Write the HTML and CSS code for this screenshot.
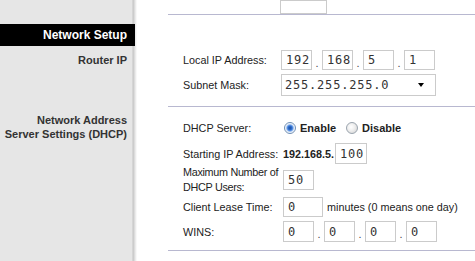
FILE: index.html
```html
<!DOCTYPE html>
<html lang="en">

<head>
    <meta charset="UTF-8">
    <meta name="viewport" content="width=device-width, initial-scale=1.0">
    <title>Network Setup</title>
    <link rel="stylesheet" href="styles.css">
</head>

<body>
    <div class="page">
        <!-- Left menu column -->
        <div class="sidebar">
            <div class="side-title">Network Setup</div>
            <div class="side-item router-head">Router IP</div>
            <div class="side-item dhcp-head">Network Address<br>Server Settings (DHCP)</div>
        </div>

        <!-- Settings -->
        <div class="main">
            <div class="stub-row"><input class="box stub" type="text" value=""></div>
            <hr class="rule">

            <div class="group lan">
                <div class="row h20">
                    <span class="label">Local IP Address:</span>
                    <div class="ip">
                        <input class="box w31" type="text" value="192">
                        <span class="dot">.</span>
                        <input class="box w31" type="text" value="168">
                        <span class="dot">.</span>
                        <input class="box w31" type="text" value="5">
                        <span class="dot">.</span>
                        <input class="box w31" type="text" value="1">
                    </div>
                </div>
                <div class="row h22 next-row">
                    <span class="label">Subnet Mask:</span>
                    <div class="box select">255.255.255.0<span class="caret"></span></div>
                </div>
            </div>
            <hr class="rule">

            <div class="group dhcp">
                <div class="row h18">
                    <span class="label">DHCP Server:</span>
                    <div class="field radios">
                        <label class="option"><span class="radio checked"></span>Enable</label>
                        <label class="option"><span class="radio"></span>Disable</label>
                    </div>
                </div>
                <div class="row h21 gap6">
                    <span class="label">Starting IP Address:</span>
                    <div class="field start-ip">
                        <b>192.168.5.</b>
                        <input class="box w32" type="text" value="100">
                    </div>
                </div>
                <div class="row h26 gap3">
                    <span class="label tight">Maximum Number of<br>DHCP Users:</span>
                    <div class="field"><input class="box w31" type="text" value="50"></div>
                </div>
                <div class="row h20 gap4">
                    <span class="label">Client Lease Time:</span>
                    <div class="field lease">
                        <input class="box w40" type="text" value="0">
                        <span>minutes (0 means one day)</span>
                    </div>
                </div>
                <div class="row h21 gap4">
                    <span class="label">WINS:</span>
                    <div class="field ip">
                        <input class="box w31" type="text" value="0">
                        <span class="dot">.</span>
                        <input class="box w31" type="text" value="0">
                        <span class="dot">.</span>
                        <input class="box w31" type="text" value="0">
                        <span class="dot">.</span>
                        <input class="box w31" type="text" value="0">
                    </div>
                </div>
            </div>
            <hr class="rule">
        </div>
    </div>
</body>

</html>
```

FILE: styles.css
```css
body {
    margin: 0;
    font-family: 'Liberation Sans', Arial, sans-serif;
    font-size: 10.8px;
    color: #222;
    background: #fff;
}

.page {
    display: flex;
    height: 261px;
    overflow: hidden;
}

.sidebar {
    width: 137px;
    flex: none;
    background: linear-gradient(to right, #e6e6e6 0, #e6e6e6 132px, #c4c4c4 133px, #e4e4e4 135px, #fff 137px);
}

.side-title {
    margin-top: 24px;
    width: 135px;
    height: 22px;
    line-height: 22px;
    padding-right: 8px;
    box-sizing: border-box;
    background: #000;
    color: #fff;
    font-size: 12px;
    font-weight: bold;
    text-align: right;
}

.side-item {
    padding-right: 10px;
    line-height: 14px;
    color: #333;
    font-size: 11px;
    font-weight: bold;
    text-align: right;
}

.router-head {
    margin-top: 7px;
}

.dhcp-head {
    margin-top: 46px;
}

.main {
    flex: 1;
    padding-left: 31px;
}

.rule {
    margin: 0;
    height: 0;
    border: 0;
    border-top: 1px solid #b8b8d0;
}

.stub-row {
    height: 14px;
    padding-left: 112px;
}

.stub {
    display: block;
    width: 47px;
    height: 21px;
    margin-top: -8px;
}

.group {
    padding-left: 15px;
}

.lan {
    padding-top: 35px;
    padding-bottom: 10px;
}

.dhcp {
    padding-top: 12px;
    padding-bottom: 8px;
}

.row {
    display: flex;
    align-items: center;
}

.h18 { height: 18px; }
.h20 { height: 20px; }
.h21 { height: 21px; }
.h22 { height: 22px; }
.h26 { height: 26px; }

.next-row { margin-top: 4px; }
.gap3 { margin-top: 3px; }
.gap4 { margin-top: 4px; }
.gap6 { margin-top: 6px; }

.label {
    width: 98px;
    flex: none;
    line-height: 14px;
    white-space: nowrap;
    color: #222;
}

.label.tight {
    line-height: 15px;
    letter-spacing: -0.3px;
}

.field {
    margin-left: 2px;
}

.box {
    box-sizing: border-box;
    height: 100%;
    margin: 0;
    padding: 0 0 0 4px;
    border: 1px solid #cbcbcb;
    border-radius: 0;
    background: #fff;
    outline: none;
    font-family: 'DejaVu Sans Mono', monospace;
    font-size: 12px;
    letter-spacing: 0.8px;
    color: #333;
}

.w31 { width: 31px; }
.w32 { width: 32px; }
.w40 { width: 40px; }

.ip {
    display: flex;
    align-items: center;
    height: 100%;
}

.dot {
    width: 10px;
    padding-top: 5px;
    text-align: center;
    color: #444;
}

.select {
    display: flex;
    align-items: center;
    justify-content: space-between;
    width: 155px;
    padding: 0 11px 0 3px;
}

.caret {
    border-left: 3px solid transparent;
    border-right: 3px solid transparent;
    border-top: 4px solid #000;
}

.radios {
    display: flex;
    gap: 10px;
    padding-left: 1px;
}

.option {
    display: flex;
    align-items: center;
    gap: 4px;
    font-size: 11px;
    font-weight: bold;
    color: #222;
}

.radio {
    width: 10px;
    height: 10px;
    border: 1px solid #9aa4ae;
    border-radius: 50%;
    background: radial-gradient(circle at 40% 40%, #fff 0, #f0f0f0 40%, #cfcfcf 100%);
}

.radio.checked {
    border-color: #6f8fb4;
    background: radial-gradient(circle, #1d4f9c 0, #2f6fd0 2px, #6ea0e8 3px, #d6e4f6 4px, #fff 5px);
}

.start-ip {
    display: flex;
    align-items: center;
    gap: 1px;
}

.start-ip b {
    color: #222;
}

.field.lease {
    display: flex;
    align-items: center;
    gap: 4px;
}

.row > .field {
    height: 100%;
}

.h26 .field {
    height: 20px;
}
```
